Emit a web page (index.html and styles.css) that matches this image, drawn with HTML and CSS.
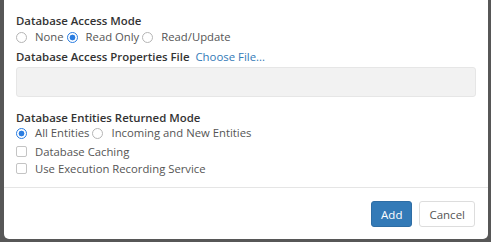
FILE: index.html
```html
<!DOCTYPE html>
<html>
<head>
  <title>Database Settings</title>
  <link rel="stylesheet" href="styles.css">
</head>
<body>
  <div class="modal">
    <div class="modal-body">
      <div class="group">
        <div class="label">Database Access Mode</div>
        <div class="options">
          <label class="opt"><input type="radio" name="access"> None</label>
          <label class="opt"><input type="radio" name="access" checked> Read Only</label>
          <label class="opt"><input type="radio" name="access"> Read/Update</label>
        </div>
      </div>

      <div class="group props">
        <div class="label">Database Access Properties File <a href="#" class="choose">Choose File...</a></div>
        <div class="file-box"></div>
      </div>

      <div class="group entities">
        <div class="label">Database Entities Returned Mode</div>
        <div class="options">
          <label class="opt"><input type="radio" name="entities" checked> All Entities</label>
          <label class="opt"><input type="radio" name="entities"> Incoming and New Entities</label>
        </div>
        <label class="check"><input type="checkbox"> Database Caching</label>
        <label class="check"><input type="checkbox"> Use Execution Recording Service</label>
      </div>
    </div>

    <div class="modal-footer">
      <button class="btn btn-primary">Add</button>
      <button class="btn btn-default">Cancel</button>
    </div>
  </div>
</body>
</html>
```

FILE: styles.css
```css
html, body {
  margin: 0;
  height: 242px;
  overflow: hidden;
}

body {
  background-color: #575757;
  font-family: "Open Sans", Arial, sans-serif;
  font-size: 11.3px;
  color: #333;
  padding: 0 3px 3px 4px;
  box-sizing: border-box;
  display: flex;
  flex-direction: column;
}

.modal {
  flex: 1;
  display: flex;
  flex-direction: column;
  background-color: #fff;
  border-radius: 0 0 5px 5px;
}

.modal-body {
  flex: 1;
  padding: 13px 12px 0 12px;
}

.label {
  font-weight: 600;
  font-size: 11.4px;
  line-height: 16px;
}

.choose {
  color: #337ab7;
  font-weight: 400;
  text-decoration: none;
  margin-left: 3px;
}

.options {
  display: flex;
  line-height: 16px;
}

.opt {
  display: flex;
  align-items: center;
  margin-right: 3px;
  color: #555;
}

.check {
  display: flex;
  align-items: center;
  line-height: 17px;
  color: #555;
}

input[type="radio"],
input[type="checkbox"] {
  appearance: none;
  -webkit-appearance: none;
  margin: 0 8px 0 0;
  width: 11px;
  height: 11px;
  border: 1px solid #b5b5b5;
  background: #fff;
  box-sizing: border-box;
}

input[type="radio"] {
  border-radius: 50%;
}

input[type="radio"]:checked {
  border-color: #2a7de1;
  background: radial-gradient(circle, #2a7de1 0 2.6px, #fff 3.2px);
}

input[type="checkbox"] {
  border-radius: 2px;
  border-color: #c4c4c4;
}

.props {
  margin-top: 4px;
}

.file-box {
  margin-top: 2px;
  height: 30px;
  background-color: #f2f2f2;
  border: 1px solid #e6e6e6;
  border-radius: 3px;
  box-sizing: border-box;
}

.entities {
  margin-top: 13px;
}

.entities .options {
  line-height: 14px;
  margin-bottom: 3px;
}

.modal-footer {
  border-top: 1px solid #e5e5e5;
  padding: 13px 13px 12px 0;
  display: flex;
  justify-content: flex-end;
  gap: 7px;
}

.btn {
  font-family: "Open Sans", Arial, sans-serif;
  font-size: 11.5px;
  height: 26px;
  padding: 0 9px;
  border-radius: 3px;
  border: 1px solid transparent;
  cursor: pointer;
}

.btn-primary {
  background-color: #337ab7;
  border-color: #2e6da4;
  color: #fff;
}

.btn-default {
  background-color: #fff;
  border-color: #ddd;
  color: #555;
}
```
